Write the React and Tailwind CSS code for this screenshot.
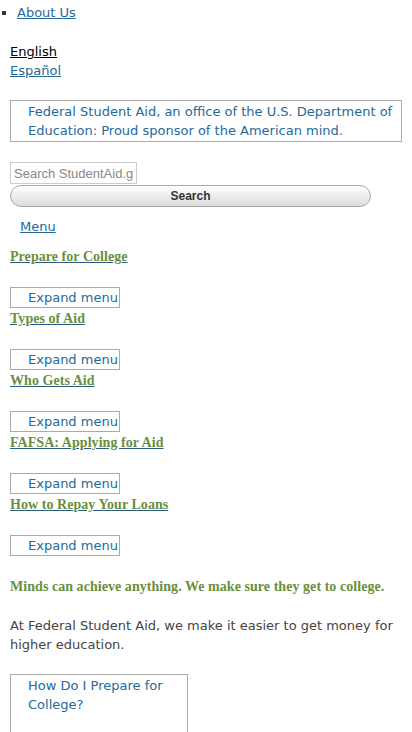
import React from 'react';

const navItems = [
  'Prepare for College',
  'Types of Aid',
  'Who Gets Aid',
  'FAFSA: Applying for Aid',
  'How to Repay Your Loans',
];

const serif = "font-['Liberation_Serif','Times_New_Roman',serif]";

const NavItem = ({ label }) => (
  <li>
    <a href="#" className={`${serif} block text-[14px] leading-[18px] font-bold tracking-[0.05px] text-[#6a8f3c] underline decoration-[#2a5d86]`}>
      {label}
    </a>
    <button className="mt-[21px] mb-[2px] block h-[21px] w-[110px] border border-[#aaa] bg-white pl-[17px] text-left text-[13px] leading-[19px] text-[#236a9c]">
      Expand menu
    </button>
  </li>
);

export default function App() {
  return (
    <div className="min-h-screen bg-white font-['DejaVu_Sans','Verdana',sans-serif] text-[13px] leading-[19px] text-[#333]">
      <ul className="list-[square] pl-[17px] pt-[3px]">
        <li>
          <a href="#" className="text-[#236a9c] underline">About Us</a>
        </li>
      </ul>

      <div className="mt-[20px] px-[10px]">
        <a href="#" className="block text-black underline">English</a>
        <a href="#" className="block text-[#236a9c] underline">Español</a>
      </div>

      <div className="mx-[10px] mt-[20px] w-[392px] border border-[#aaa] py-[1px] pl-[17px] text-[#236a9c]">
        Federal Student Aid, an office of the U.S. Department of Education: Proud sponsor of the American mind.
      </div>

      <form className="mt-[20px] px-[10px]">
        <input
          type="text"
          placeholder="Search StudentAid.gov"
          className="block h-[22px] w-[127px] border border-[#ccc] px-[3px] font-['Liberation_Sans',sans-serif] text-[13px] placeholder:text-[#888]"
        />
        <button
          type="button"
          className="mt-[1px] block h-[22px] w-[361px] rounded-full border border-[#aaa] bg-gradient-to-b from-white to-[#dcdcdc] font-['Liberation_Sans',sans-serif] text-[12px] font-bold text-[#333]"
        >
          Search
        </button>
      </form>

      <div className="mt-[10px] pl-[20px]">
        <a href="#" className="text-[#236a9c] underline">Menu</a>
      </div>

      <ul className="mt-[12px] flex flex-col px-[10px]">
        {navItems.map((item) => (
          <NavItem key={item} label={item} />
        ))}
      </ul>

      <div className="mt-[20px] px-[10px]">
        <h2 className={`${serif} text-[14px] leading-[18px] font-bold tracking-[0.05px] text-[#6a8f3c]`}>
          Minds can achieve anything. We make sure they get to college.
        </h2>
        <p className="mt-[20px] text-[#444]">
          At Federal Student Aid, we make it easier to get money for higher education.
        </p>
        <div className="mt-[20px] h-[80px] w-[178px] border border-[#aaa] pl-[17px] pt-[1px] text-[#236a9c]">
          How Do I Prepare for College?
        </div>
      </div>
    </div>
  );
}
